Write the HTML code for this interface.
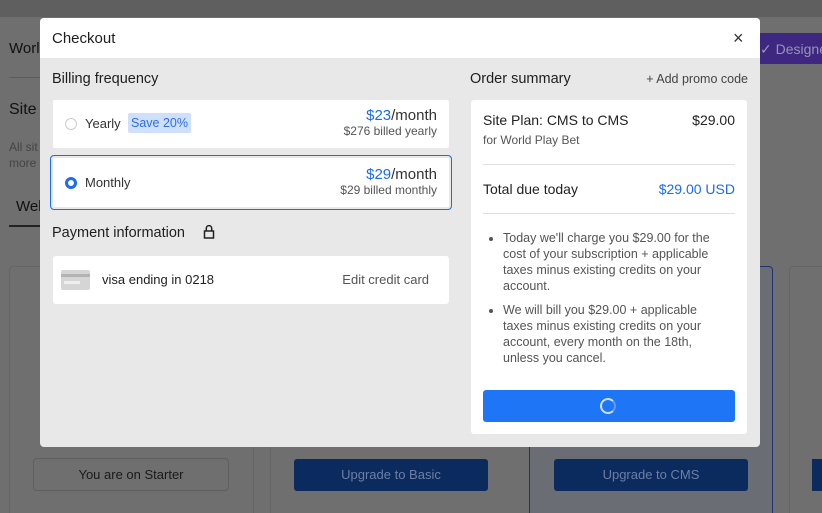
<!DOCTYPE html>
<html><head><style>
*{box-sizing:border-box;margin:0;padding:0}
html,body{width:822px;height:513px;overflow:hidden}
body{background:#6f6f6f;font-family:"Liberation Sans",sans-serif;position:relative;color:#1e1e1e}
.a{position:absolute}
</style></head><body>
<div class="a" style="left:0;top:0;width:822px;height:17px;background:#5f5f5f"></div>
<div class="a" style="left:9px;top:40px;font-size:15px;color:#111">World</div>
<div class="a" style="left:9px;top:77px;width:32px;height:1px;background:#5c5c5c"></div>
<div class="a" style="left:9px;top:101px;font-size:16px;color:#111">Site p</div>
<div class="a" style="left:9px;top:139px;font-size:12px;color:#444;line-height:16px">All sit<br>more</div>
<div class="a" style="left:16px;top:198px;font-size:15px;color:#111">Web</div>
<div class="a" style="left:9px;top:225px;width:32px;height:2px;background:#222"></div>
<div class="a" style="left:752px;top:33px;width:70px;height:31px;background:#3d2780;color:#9a93b5;font-size:14px;padding:8px 0 0 8px;white-space:nowrap;overflow:hidden">✓ Designer</div>
<div class="a" style="left:9px;top:266px;width:245px;height:260px;border:1px solid #656565;border-radius:4px"></div>
<div class="a" style="left:270px;top:266px;width:243px;height:260px;border-left:1px solid #656565"></div>
<div class="a" style="left:529px;top:266px;width:244px;height:260px;border:1px solid #1d3570;border-radius:4px;background:#6a6d74"></div>
<div class="a" style="left:789px;top:266px;width:40px;height:260px;border:1px solid #656565;border-radius:4px"></div>
<div class="a" style="left:33px;top:458px;width:196px;height:33px;border:1px solid #5f5f5f;border-radius:4px;text-align:center;line-height:31px;font-size:13px;color:#1a1a1a">You are on Starter</div>
<div class="a" style="left:294px;top:459px;width:194px;height:32px;background:#0b2a5e;border-radius:3px;text-align:center;line-height:32px;font-size:13px;color:#6d7fa4">Upgrade to Basic</div>
<div class="a" style="left:554px;top:459px;width:194px;height:32px;background:#0b2a5e;border-radius:3px;text-align:center;line-height:32px;font-size:13px;color:#6d7fa4">Upgrade to CMS</div>
<div class="a" style="left:812px;top:459px;width:10px;height:32px;background:#0b2a5e"></div>
<div class="a" style="left:40px;top:18px;width:720px;height:429px;background:#e8e8e8;border-radius:4px;overflow:hidden">
 <div style="height:40px;background:#fff;position:relative">
  <div class="a" style="left:12px;top:12px;font-size:15px">Checkout</div>
  <div class="a" style="left:693px;top:10px;font-size:18px;color:#333">×</div>
 </div>
 <div class="a" style="left:12px;top:53px;font-size:14.5px;font-weight:500">Billing frequency</div>
 <div class="a" style="left:13px;top:82px;width:396px;height:48px;background:#fff;border-radius:2px">
  <div class="a" style="left:12px;top:18px;width:12px;height:12px;border:1px solid #ccc;border-radius:50%"></div>
  <div class="a" style="left:32px;top:16px;font-size:13px;color:#333">Yearly</div>
  <div class="a" style="left:75px;top:13px;width:63px;height:20px;background:#cfe0fd;border-radius:2px;color:#2e6ee6;font-size:12.5px;line-height:20px;text-align:center">Save 20%</div>
  <div class="a" style="right:12px;top:7px;font-size:15px;color:#333;text-align:right;line-height:17px"><span style="color:#1a6cf0">$23</span>/month<div style="font-size:12px;color:#555;line-height:15px">$276 billed yearly</div></div>
 </div>
 <div class="a" style="left:10px;top:137px;width:402px;height:55px;border:1px solid #1a6cf0;border-radius:4px;padding:2px">
  <div style="background:#fff;height:49px;position:relative">
   <div class="a" style="left:12px;top:19px;width:12px;height:12px;border:3.5px solid #1a6cf0;border-radius:50%;background:#fff"></div>
   <div class="a" style="left:32px;top:17px;font-size:13px;color:#333">Monthly</div>
   <div class="a" style="right:12px;top:8px;font-size:15px;color:#333;text-align:right;line-height:17px"><span style="color:#1a6cf0">$29</span>/month<div style="font-size:12px;color:#555;line-height:15px">$29 billed monthly</div></div>
  </div>
 </div>
 <div class="a" style="left:12px;top:207px;font-size:14.5px;font-weight:500">Payment information</div>
 <svg class="a" style="left:163px;top:206px" width="12" height="15" viewBox="0 0 12 15"><rect x="1.5" y="7" width="9" height="7" fill="none" stroke="#222" stroke-width="1.5"/><path d="M3.3 7V4.3a2.7 2.7 0 0 1 5.4 0V7" fill="none" stroke="#222" stroke-width="1.5"/></svg>
 <div class="a" style="left:13px;top:238px;width:396px;height:48px;background:#fff;border-radius:3px">
  <div class="a" style="left:8px;top:14px;width:29px;height:20px;background:#d5d5d5;border-radius:2px"><div style="margin-top:4px;height:3px;background:#b3b3b3"></div><div style="margin:4px 0 0 3px;width:16px;height:3px;background:#eee"></div></div>
  <div class="a" style="left:49px;top:16px;font-size:13px;color:#222">visa ending in 0218</div>
  <div class="a" style="right:20px;top:16px;font-size:13px;color:#555">Edit credit card</div>
 </div>
 <div class="a" style="left:430px;top:53px;font-size:14.5px;font-weight:500">Order summary</div>
 <div class="a" style="right:12px;top:54px;font-size:12.5px;color:#444">+ Add promo code</div>
 <div class="a" style="left:431px;top:82px;width:276px;height:334px;background:#fff;border-radius:3px">
  <div class="a" style="left:12px;top:12px;font-size:14px;color:#222">Site Plan: CMS to CMS</div>
  <div class="a" style="right:12px;top:12px;font-size:14px;color:#222">$29.00</div>
  <div class="a" style="left:12px;top:33px;font-size:12px;color:#555">for World Play Bet</div>
  <div class="a" style="left:12px;top:64px;width:252px;height:1px;background:#e0e0e0"></div>
  <div class="a" style="left:12px;top:81px;font-size:14px;color:#222">Total due today</div>
  <div class="a" style="right:12px;top:81px;font-size:14px;color:#1a6cf0">$29.00 USD</div>
  <div class="a" style="left:12px;top:113px;width:252px;height:1px;background:#e0e0e0"></div>
  <ul class="a" style="left:32px;top:130px;width:216px;font-size:12.5px;line-height:16px;color:#555">
   <li style="margin-bottom:8px">Today we'll charge you $29.00 for the cost of your subscription + applicable taxes minus existing credits on your account.</li>
   <li>We will bill you $29.00 + applicable taxes minus existing credits on your account, every month on the 18th, unless you cancel.</li>
  </ul>
  <div class="a" style="left:12px;top:290px;width:252px;height:32px;background:#1e76f6;border-radius:3px">
   <div class="a" style="left:117px;top:8px;width:16px;height:16px;border:2px solid #cfe0fd;border-right-color:#5b9af8;border-radius:50%"></div>
  </div>
 </div>
</div>
</body></html>
